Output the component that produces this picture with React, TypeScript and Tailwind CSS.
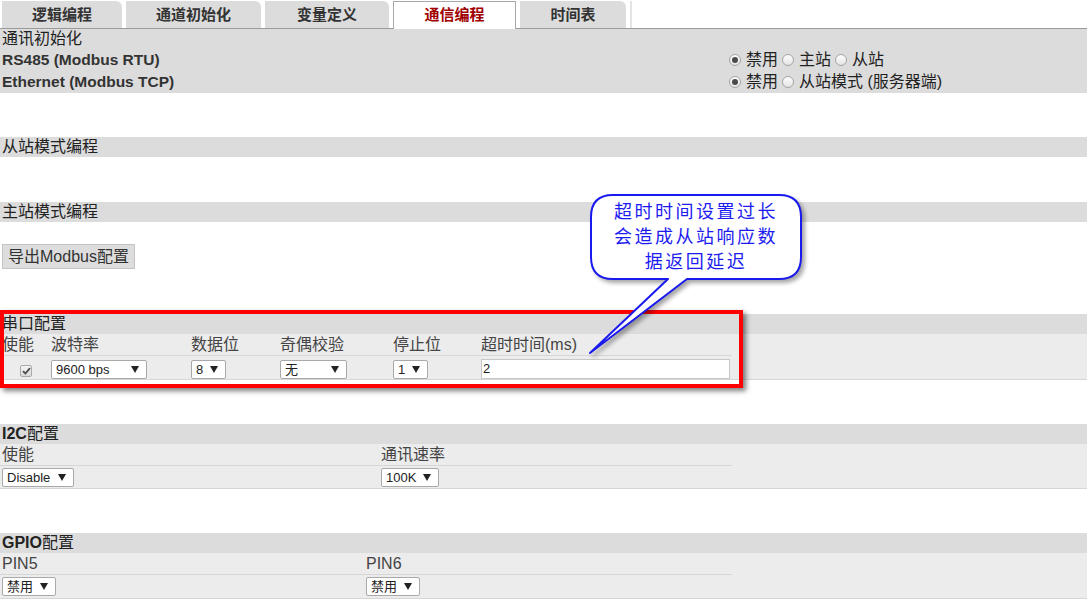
import React from 'react';

// ─── Small form bits ─────────────────────────────────────────────────────────

function Radio({ checked }: { checked?: boolean }) {
  return (
    <span className="inline-flex h-[12px] w-[12px] shrink-0 items-center justify-center rounded-full border border-[#a4a4a4] bg-gradient-to-b from-[#fdfdfd] to-[#e4e4e4]">
      {checked && <span className="h-[6px] w-[6px] rounded-full bg-[#4a4a4a]" />}
    </span>
  );
}

function Caret() {
  return (
    <svg width="8" height="7" viewBox="0 0 8 7" className="shrink-0">
      <path d="M0 0 H8 L4 7 Z" fill="#222" />
    </svg>
  );
}

function Select({ value, width }: { value: string; width: string }) {
  return (
    <div
      className={`flex h-[19px] items-center justify-between rounded-[2px] border border-[#a9a9a9] bg-white pl-[4px] pr-[7px] text-[13px] leading-none text-[#222] ${width}`}
    >
      <span>{value}</span>
      <Caret />
    </div>
  );
}

function Checkbox() {
  return (
    <span className="inline-flex h-[12px] w-[12px] items-center justify-center rounded-[2px] border border-[#aaa] bg-gradient-to-b from-[#f6f6f6] to-[#d8d8d8]">
      <svg width="9" height="8" viewBox="0 0 9 8">
        <path d="M1 4.2 L3.4 6.5 L8 1.2" fill="none" stroke="#4a4a4a" strokeWidth="1.8" />
      </svg>
    </span>
  );
}

function SectionBar({ children }: { children: React.ReactNode }) {
  return (
    <div className="h-[20px] bg-[#dcdcdc] pl-[2px] text-[16px] leading-[20px] text-[#222]">
      {children}
    </div>
  );
}

// ─── Page ────────────────────────────────────────────────────────────────────

const tabs = [
  { label: '逻辑编程', w: 'w-[120px]' },
  { label: '通道初始化', w: 'w-[135px]' },
  { label: '变量定义', w: 'w-[124px]' },
  { label: '通信编程', w: 'w-[123px]', active: true },
  { label: '时间表', w: 'w-[106px]' },
];

export default function App() {
  return (
    <div className="relative h-[602px] w-full overflow-hidden bg-white font-['Liberation_Sans','Noto_Sans_CJK_SC',sans-serif] text-[#333]">
      {/* Tabs */}
      <div className="flex h-[29px] items-end gap-[4px] border-b border-[#9a9a9a] pl-[2px]">
        {tabs.map((t) =>
          t.active ? (
            <div
              key={t.label}
              className={`-mb-px h-[28px] border border-b-0 border-[#a8a8a8] bg-white text-center text-[15px] font-bold leading-[26px] text-[#a00000] ${t.w}`}
            >
              {t.label}
            </div>
          ) : (
            <div
              key={t.label}
              className={`h-[27px] rounded-tr-[6px] bg-[#dcdcdc] text-center text-[15px] font-bold leading-[27px] text-[#333] ${t.w}`}
            >
              {t.label}
            </div>
          ),
        )}
        <div className="h-[27px] w-[2px] bg-[#e4e4e4]" />
      </div>

      {/* 通讯初始化 */}
      <div className="h-[64px] bg-[#dcdcdc]">
        <div className="h-[20px] pl-[2px] text-[16px] leading-[20px] text-[#222]">通讯初始化</div>
        <div className="flex h-[22px] items-center">
          <span className="w-[729px] pl-[2px] text-[15.5px] font-bold">RS485 (Modbus RTU)</span>
          <span className="flex items-center text-[16px] text-[#222]">
            <Radio checked />
            <span className="ml-[5px] mr-[4px]">禁用</span>
            <Radio />
            <span className="ml-[5px] mr-[4px]">主站</span>
            <Radio />
            <span className="ml-[5px]">从站</span>
          </span>
        </div>
        <div className="flex h-[22px] items-center">
          <span className="w-[729px] pl-[2px] text-[15.5px] font-bold">Ethernet (Modbus TCP)</span>
          <span className="flex items-center text-[16px] text-[#222]">
            <Radio checked />
            <span className="ml-[5px] mr-[4px]">禁用</span>
            <Radio />
            <span className="ml-[5px]">从站模式 (服务器端)</span>
          </span>
        </div>
      </div>

      <div className="mt-[44px]">
        <SectionBar>从站模式编程</SectionBar>
      </div>

      <div className="mt-[45px]">
        <SectionBar>主站模式编程</SectionBar>
      </div>

      <button
        type="button"
        className="ml-[2px] mt-[22px] h-[25px] w-[133px] border border-[#c4c4c4] bg-[#dddddd] text-[16px] leading-[23px] text-[#333]"
      >
        导出Modbus配置
      </button>

      {/* 串口配置 */}
      <div className="mt-[45px]">
        <SectionBar>串口配置</SectionBar>
        <div className="border-b border-[#d6d6d6] bg-[#ececec]">
          <div className="w-[732px]">
            <div className="grid h-[22px] grid-cols-[49px_140px_89px_113px_88px_251px] border-b border-[#d6d6d6] pl-[2px] text-[16px] leading-[21px] text-[#444]">
              <span>使能</span>
              <span>波特率</span>
              <span>数据位</span>
              <span>奇偶校验</span>
              <span>停止位</span>
              <span>超时时间(ms)</span>
            </div>
            <div className="grid h-[23px] grid-cols-[49px_140px_89px_113px_88px_251px] items-center pl-[2px]">
              <span className="pl-[18px] pt-[2px]">
                <Checkbox />
              </span>
              <Select value="9600 bps" width="w-[96px]" />
              <Select value="8" width="w-[35px]" />
              <Select value="无" width="w-[67px]" />
              <Select value="1" width="w-[35px]" />
              <div className="h-[20px] w-[249px] border border-[#c8c8c8] bg-white px-[1px] text-[13px] leading-[18px] text-[#222]">
                2
              </div>
            </div>
          </div>
        </div>
      </div>

      {/* I2C配置 */}
      <div className="mt-[44px]">
        <SectionBar>
          <span className="font-bold">I2C</span>配置
        </SectionBar>
        <div className="border-b border-[#d6d6d6] bg-[#ececec]">
          <div className="w-[732px]">
            <div className="grid h-[22px] grid-cols-[379px_351px] border-b border-[#d6d6d6] pl-[2px] text-[16px] leading-[21px] text-[#444]">
              <span>使能</span>
              <span>通讯速率</span>
            </div>
            <div className="grid h-[22px] grid-cols-[379px_351px] items-center pl-[2px]">
              <Select value="Disable" width="w-[72px]" />
              <Select value="100K" width="w-[58px]" />
            </div>
          </div>
        </div>
      </div>

      {/* GPIO配置 */}
      <div className="mt-[44px]">
        <SectionBar>
          <span className="font-bold">GPIO</span>配置
        </SectionBar>
        <div className="border-b border-[#d6d6d6] bg-[#ececec]">
          <div className="w-[732px]">
            <div className="grid h-[22px] grid-cols-[364px_366px] border-b border-[#d6d6d6] pl-[2px] text-[16px] leading-[21px] text-[#444]">
              <span>PIN5</span>
              <span>PIN6</span>
            </div>
            <div className="grid h-[23px] grid-cols-[364px_366px] items-center pl-[2px]">
              <Select value="禁用" width="w-[54px]" />
              <Select value="禁用" width="w-[54px]" />
            </div>
          </div>
        </div>
      </div>

      {/* Red highlight around the serial config */}
      <div className="pointer-events-none absolute left-0 top-[310px] h-[78px] w-[743px] border-[4px] border-[#ff0000] shadow-[3px_3px_5px_rgba(0,0,0,0.5)]" />

      {/* Callout */}
      <svg
        width="240"
        height="175"
        viewBox="0 0 240 175"
        className="pointer-events-none absolute left-[580px] top-[190px] drop-shadow-[3px_3px_2px_rgba(0,0,0,0.35)]"
      >
        <path
          d="M33 5 H199 Q221 5 221 27 V67 Q221 89 199 89 H107 L10 163 L88 89 H33 Q11 89 11 67 V27 Q11 5 33 5 Z"
          fill="#ffffff"
          stroke="#1a1aee"
          strokeWidth="2"
          strokeLinejoin="round"
        />
      </svg>
      <div className="pointer-events-none absolute left-[591px] top-[195px] flex h-[84px] w-[210px] flex-col items-center justify-center text-[18px] leading-[25px] tracking-[2.5px] text-[#1c1cf0]">
        <span>超时时间设置过长</span>
        <span>会造成从站响应数</span>
        <span>据返回延迟</span>
      </div>
    </div>
  );
}
